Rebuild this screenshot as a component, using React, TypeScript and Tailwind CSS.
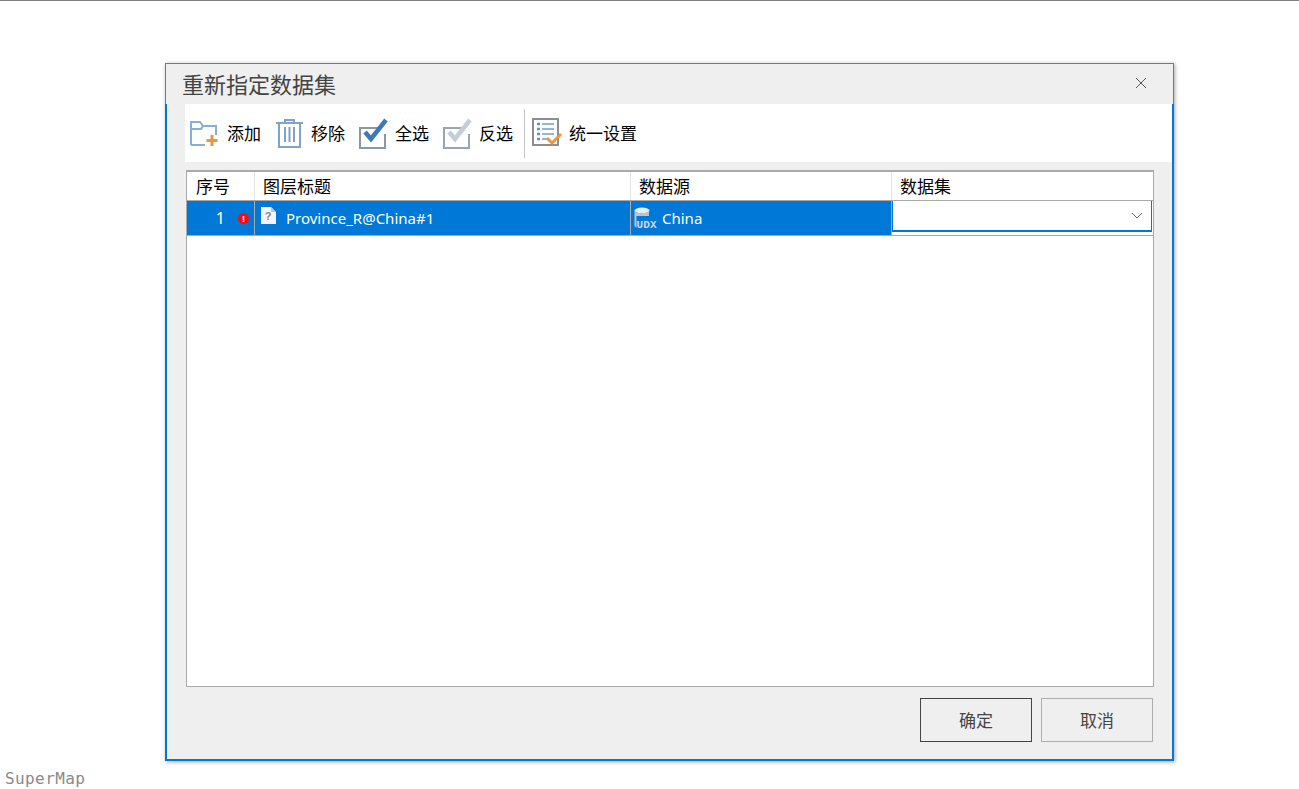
import React from 'react';

const font = "font-['Noto_Sans','Noto_Sans_CJK_SC',sans-serif]";

function AddIcon() {
  return (
    <svg width="30" height="30" viewBox="0 0 30 30" fill="none">
      <path d="M2 27V4h9l3 4h13v9" stroke="#86aed6" strokeWidth="2" />
      <path d="M2 11h10l2-3" stroke="#86aed6" strokeWidth="2" />
      <path d="M2 27h14" stroke="#86aed6" strokeWidth="2" />
      <path d="M23 17v11M17.500 22.500h11" stroke="#e8963f" strokeWidth="3" />
    </svg>
  );
}

function TrashIcon() {
  return (
    <svg width="30" height="30" viewBox="0 0 30 30" fill="none">
      <path d="M1 5h27" stroke="#7fa3c7" strokeWidth="2" />
      <path d="M10 5V2h9v3" stroke="#7fa3c7" strokeWidth="2" />
      <path d="M4 5v24h21V5" stroke="#7fa3c7" strokeWidth="2" />
      <path d="M10 9v15M14.500 9v15M19 9v15" stroke="#7fa3c7" strokeWidth="2" />
    </svg>
  );
}

function CheckIcon({ box, mark }: { box: string; mark: string }) {
  return (
    <svg width="32" height="32" viewBox="0 0 32 32" fill="none">
      <path d="M24 11H2v20h25V17" stroke={box} strokeWidth="2" />
      <path d="M7 15l6 7L28 3" stroke={mark} strokeWidth="4.500" />
    </svg>
  );
}

function ListIcon() {
  return (
    <svg width="32" height="30" viewBox="0 0 32 30" fill="none">
      <rect x="1" y="1" width="25" height="26" stroke="#8a8f96" strokeWidth="2" fill="#fff" />
      <path d="M5 6h3M5 11h3M5 16h3M5 21h3" stroke="#5b93d3" strokeWidth="2.500" />
      <path d="M10 6h12M10 11h12M10 16h12M10 21h7" stroke="#6f9fd0" strokeWidth="1.500" />
      <path d="M15 20l5 5 9-9" stroke="#e8963f" strokeWidth="3" />
    </svg>
  );
}

function ToolButton({ icon, label, className }: { icon: React.ReactNode; label: string; className: string }) {
  return (
    <div className={`flex items-center ${className}`}>
      {icon}
      <span className="text-[17px] leading-none text-black">{label}</span>
    </div>
  );
}

function UnknownDocIcon() {
  return (
    <svg width="17" height="19" viewBox="0 0 17 19" fill="none">
      <path d="M1 1h10l5 5v12H1z" fill="#f4f6f9" />
      <path d="M11 1l5 5h-5z" fill="#b9c6d6" />
      <text x="8" y="14" textAnchor="middle" fontSize="11" fontWeight="700" fill="#7d8590" fontFamily="Liberation Sans">?</text>
    </svg>
  );
}

function UdxIcon() {
  return (
    <svg width="24" height="24" viewBox="0 0 24 24" fill="none">
      <ellipse cx="9" cy="4.500" rx="7.500" ry="3" fill="#e6ebf1" />
      <path d="M1.500 5v15l2 2V10h12.500V5c-2 3-12.500 3-14.500 0z" fill="#b9c4d2" />
      <text x="13.500" y="21.500" textAnchor="middle" fontSize="11" fontWeight="700" fill="#cfd8e3" fontFamily="Liberation Mono" textLength="20">UDX</text>
    </svg>
  );
}

export default function App() {
  return (
    <div className={`h-[789px] w-[1299px] overflow-hidden bg-white ${font}`}>
      <div className="h-px bg-[#808080]" />
      <div className="ml-[165px] mt-[62px] h-[698px] w-[1009px] shadow-[1px_1px_4px_rgba(0,0,0,0.35)]">
        <div className="flex h-[41px] items-center justify-between border border-b-0 border-[#5d7f99] bg-[#efefef] pl-[16px] pr-[26px]">
          <h1 className="text-[22px] font-normal leading-none text-[#444444]">重新指定数据集</h1>
          <svg className="-mt-[2px]" width="12" height="12" viewBox="0 0 12 12" fill="none">
            <path d="M1 1l10 10M11 1L1 11" stroke="#555555" strokeWidth="1" />
          </svg>
        </div>

        <div className="h-[657px] border-2 border-t-0 border-[#0078d7] bg-[#efefef]">
          <div className="ml-[18px] flex h-[58px] items-center bg-white">
            <ToolButton icon={<AddIcon />} label="添加" className="ml-[4px] w-[84px] gap-[8px]" />
            <ToolButton icon={<TrashIcon />} label="移除" className="w-[84px] gap-[6px] pl-[2px]" />
            <ToolButton icon={<CheckIcon box="#8a97a6" mark="#3f79b5" />} label="全选" className="w-[84px] gap-[5px] pl-[1px]" />
            <ToolButton icon={<CheckIcon box="#9aa5b1" mark="#c4ced9" />} label="反选" className="w-[83px] gap-[5px] pl-[1px]" />
            <div className="h-[49px] w-px bg-[#c4c4c4]" />
            <ToolButton icon={<ListIcon />} label="统一设置" className="ml-[7px] gap-[5px]" />
          </div>

          <div className="ml-[19px] mt-[8px] h-[517px] w-[968px] border border-t-2 border-[#a9a9a9] bg-white">
            <div className="flex h-[28px] text-[17px] leading-[30px] text-black">
              <div className="w-[68px] border-r border-[#e3e3e3] pl-[9px]">序号</div>
              <div className="w-[376px] border-r border-[#e3e3e3] pl-[8px]">图层标题</div>
              <div className="w-[261px] border-r border-[#e3e3e3] pl-[8px]">数据源</div>
              <div className="flex-1 pl-[8px]">数据集</div>
            </div>
            <div className="flex h-[36px] border-y border-[#a9a9a9] text-[15px] text-white">
              <div className="flex w-[68px] items-center justify-end border-r border-[#a9a9a9] bg-[#0078d7] pr-[5px]">
                <span className="mr-[13px] text-[16px]">1</span>
                <span className="flex h-[11px] w-[11px] items-center justify-center rounded-full bg-[#f20d1a] text-[9px] font-bold leading-none text-white">!</span>
              </div>
              <div className="flex w-[376px] items-center border-r border-[#a9a9a9] bg-[#0078d7] pl-[5px]">
                <div className="-mt-[5px] mr-[9px]"><UnknownDocIcon /></div>
                <span>Province_R@China#1</span>
              </div>
              <div className="flex w-[261px] items-center border-r border-[#a9a9a9] bg-[#0078d7] pl-[2px]">
                <UdxIcon />
                <span className="ml-[5px]">China</span>
              </div>
              <div className="mb-[3px] mr-px flex flex-1 items-center justify-end border-x border-b-2 border-[#0078d7] bg-white pr-[8px]">
                <svg width="12" height="7" viewBox="0 0 12 7" fill="none">
                  <path d="M1 1l5 5 5-5" stroke="#666666" strokeWidth="1" />
                </svg>
              </div>
            </div>
          </div>

          <div className="mr-[19px] mt-[11px] flex justify-end gap-[9px] text-[17px] text-[#444444]">
            <button className="h-[44px] w-[112px] border border-[#444444] pt-px">确定</button>
            <button className="h-[44px] w-[112px] border border-[#adadad] pt-px">取消</button>
          </div>
        </div>
      </div>
      <div className="ml-[5px] mt-[9px] font-['DejaVu_Sans_Mono',monospace] text-[16px] leading-[18px] tracking-[0.4px] text-[#8a8a8a]">SuperMap</div>
    </div>
  );
}
